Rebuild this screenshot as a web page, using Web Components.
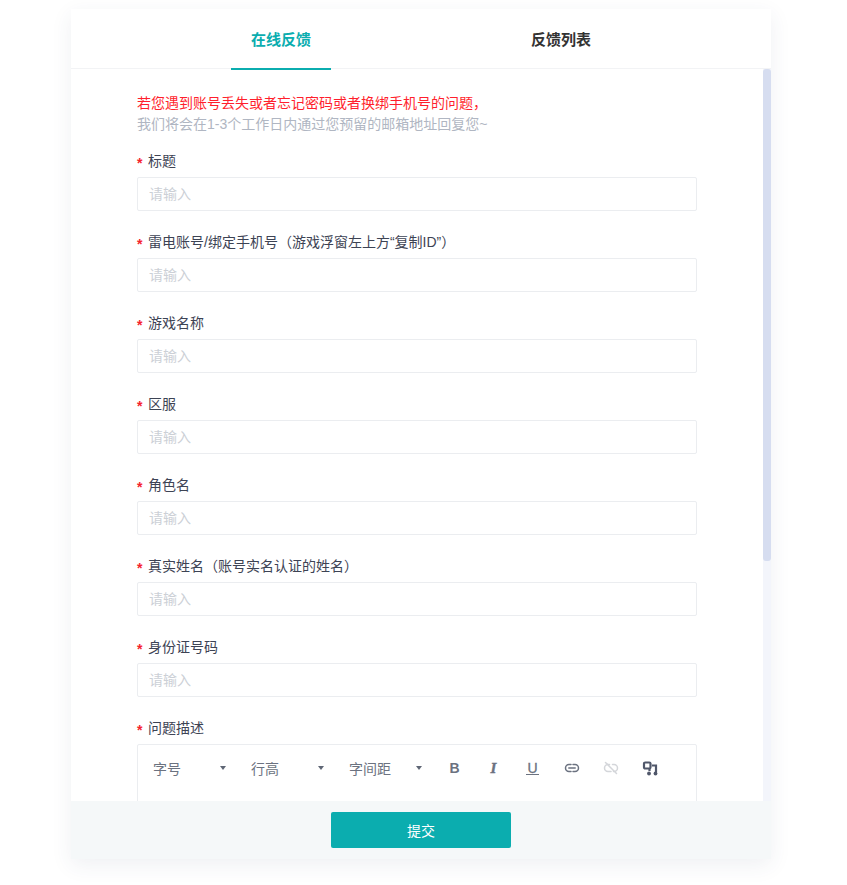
<!DOCTYPE html>
<html>
<head>
<meta charset="utf-8">
<title>反馈</title>
<style>
  html, body { margin: 0; height: 100%; background: #fff; overflow: hidden; }
  body { font: 14px "Liberation Sans", "Noto Sans CJK SC", sans-serif; }
</style>
</head>
<body>
<feedback-card>
  <form-field label="标题"></form-field>
  <form-field label="雷电账号/绑定手机号（游戏浮窗左上方“复制ID”）"></form-field>
  <form-field label="游戏名称"></form-field>
  <form-field label="区服"></form-field>
  <form-field label="角色名"></form-field>
  <form-field label="真实姓名（账号实名认证的姓名）"></form-field>
  <form-field label="身份证号码"></form-field>
  <form-field label="问题描述" kind="editor"></form-field>
</feedback-card>

<script>
/****************************
 * Form field
 ****************************/
class FormField extends HTMLElement {
  constructor() {
    super();
    this.attachShadow({ mode: 'open' });
  }
  connectedCallback() {
    const label = this.getAttribute('label');
    const body = this.getAttribute('kind') === 'editor'
      ? '<rich-editor></rich-editor>'
      : '<input placeholder="请输入">';
    this.shadowRoot.innerHTML = `
      <style>
        :host { display: block; margin-bottom: 19px; }
        .label { display: flex; height: 24px; margin-bottom: 4px; align-items: center; color: #3d4354; font-size: 14px; line-height: 24px; }
        .star { color: #f5222d; width: 11px; font-size: 14px; font-weight: 700; transform: translateY(2px); }
        input {
          display: block; box-sizing: border-box; width: 100%; height: 34px; padding: 0 11px;
          border: 1px solid #ebedf0; border-radius: 2px; outline: none; background: #fff;
          font: inherit; font-size: 14px; color: #333;
        }
        input::placeholder { color: #ccd0d6; opacity: 1; }
      </style>
      <div class="label"><span class="star">*</span><span>${label}</span></div>
      ${body}
    `;
  }
}
customElements.define('form-field', FormField);

/****************************
 * Editor toolbar
 ****************************/
class RichEditor extends HTMLElement {
  constructor() {
    super();
    this.attachShadow({ mode: 'open' });
    this.shadowRoot.innerHTML = `
      <style>
        :host { display: block; box-sizing: border-box; height: 300px; border: 1px solid #ebedf0; border-radius: 2px; }
        .bar { display: flex; align-items: center; height: 46px; padding-left: 15px; color: #6b7280; }
        .pick { display: flex; align-items: center; justify-content: space-between; width: 73px; margin-right: 25px; font-size: 14px; }
        .pick:nth-child(3) { margin-right: 13px; }
        .pick i { width: 0; height: 0; border: 3.5px solid transparent; border-top: 4px solid #5f6675; border-bottom: 0; }
        .btn { display: flex; align-items: center; justify-content: center; width: 39px; height: 20px; font-size: 14px; font-weight: 700; color: #6b7280; }
        .btn svg { display: block; }
        .i { font-family: "Liberation Serif", serif; font-style: italic; font-size: 15px; -webkit-text-stroke: .4px currentColor; }
        .u span { display: block; line-height: 12px; padding: 0 1px; border-bottom: 1.5px solid currentColor; font-weight: 400; -webkit-text-stroke: .3px currentColor; }
        .off { color: #d4d6da; }
        .fmt { color: #50576a; }
      </style>
      <div class="bar">
        <div class="pick"><span>字号</span><i></i></div>
        <div class="pick"><span>行高</span><i></i></div>
        <div class="pick"><span>字间距</span><i></i></div>
        <div class="btn">B</div>
        <div class="btn i">I</div>
        <div class="btn u"><span>U</span></div>
        <div class="btn">
          <svg width="16" height="16" viewBox="0 0 16 16" fill="none" stroke="currentColor" stroke-width="1.5" stroke-linecap="round">
            <path d="M7 4.500H5a3.500 3.500 0 0 0 0 7h2M9 4.500h2a3.500 3.500 0 0 1 0 7H9M4.800 8h6.400"/>
          </svg>
        </div>
        <div class="btn off">
          <svg width="16" height="16" viewBox="0 0 16 16" fill="none" stroke="currentColor" stroke-width="1.5" stroke-linecap="round">
            <path d="M6.500 4.500H5a3.500 3.500 0 0 0 0 7h3M9.500 4.500H11a3.500 3.500 0 0 1 0 7h-.5M2.500 2.500l11 11"/>
          </svg>
        </div>
        <div class="btn fmt">
          <svg width="16" height="16" viewBox="0 0 16 16" fill="none" stroke="currentColor" stroke-width="2.2">
            <rect x="2" y="2.500" width="6.500" height="6" rx="1.200"/>
            <path d="M7.500 8v3M10 5.500h4v6.500"/>
            <circle cx="7" cy="13.500" r="1.900" fill="currentColor" stroke="none"/>
            <circle cx="13.500" cy="13.500" r="1.900" fill="currentColor" stroke="none"/>
          </svg>
        </div>
      </div>
    `;
  }
}
customElements.define('rich-editor', RichEditor);

/****************************
 * Card: tabs, scrolling form, footer
 ****************************/
class FeedbackCard extends HTMLElement {
  constructor() {
    super();
    this.attachShadow({ mode: 'open' });
    this.shadowRoot.innerHTML = `
      <style>
        :host { display: flex; flex-direction: column; box-sizing: border-box; width: 700px; height: 850px; margin: 9px 0 0 71px; background: #fff; box-shadow: 0 6px 20px rgba(50, 60, 100, .08); }
        .tabs { display: flex; justify-content: space-between; flex: none; height: 60px; box-sizing: border-box; padding: 0 160px; border-bottom: 1px solid #f2f3f5; }
        .tab { position: relative; width: 100px; height: 60px; line-height: 61px; text-align: center; font-size: 15px; font-weight: 700; color: #333; }
        .tab.on { color: #0badaf; }
        .tab.on::after { content: ""; position: absolute; left: 0; right: 0; bottom: -1px; height: 2px; background: #0badaf; }
        .middle { display: flex; flex: 1; min-height: 0; }
        .scroll { flex: 1; min-width: 0; overflow: hidden; }
        .track { flex: none; width: 8px; background: #f3f5fb; }
        .thumb { height: 492px; border-radius: 3px; background: #d6ddf0; }
        .inner { box-sizing: border-box; padding: 24px 66px 0; }
        .tip { margin: 0 0 14px; line-height: 21px; font-size: 14px; color: #b0b6c2; }
        .tip b { display: block; font-weight: 400; color: #ff1f2d; }
        .foot { flex: none; display: flex; justify-content: center; align-items: flex-start; height: 58px; padding-top: 11px; box-sizing: border-box; background: #f5f8f9; }
        .submit { display: block; width: 180px; height: 36px; border: 0; border-radius: 2px; background: #0badaf; color: #fff; font: inherit; font-size: 14px; }
      </style>
      <div class="tabs">
        <div class="tab on">在线反馈</div>
        <div class="tab">反馈列表</div>
      </div>
      <div class="middle">
        <div class="scroll">
          <div class="inner">
            <p class="tip"><b>若您遇到账号丢失或者忘记密码或者换绑手机号的问题，</b>我们将会在1-3个工作日内通过您预留的邮箱地址回复您~</p>
            <slot></slot>
          </div>
        </div>
        <div class="track"><div class="thumb"></div></div>
      </div>
      <div class="foot"><button class="submit" type="button">提交</button></div>
    `;
  }
}
customElements.define('feedback-card', FeedbackCard);
</script>
</body>
</html>
